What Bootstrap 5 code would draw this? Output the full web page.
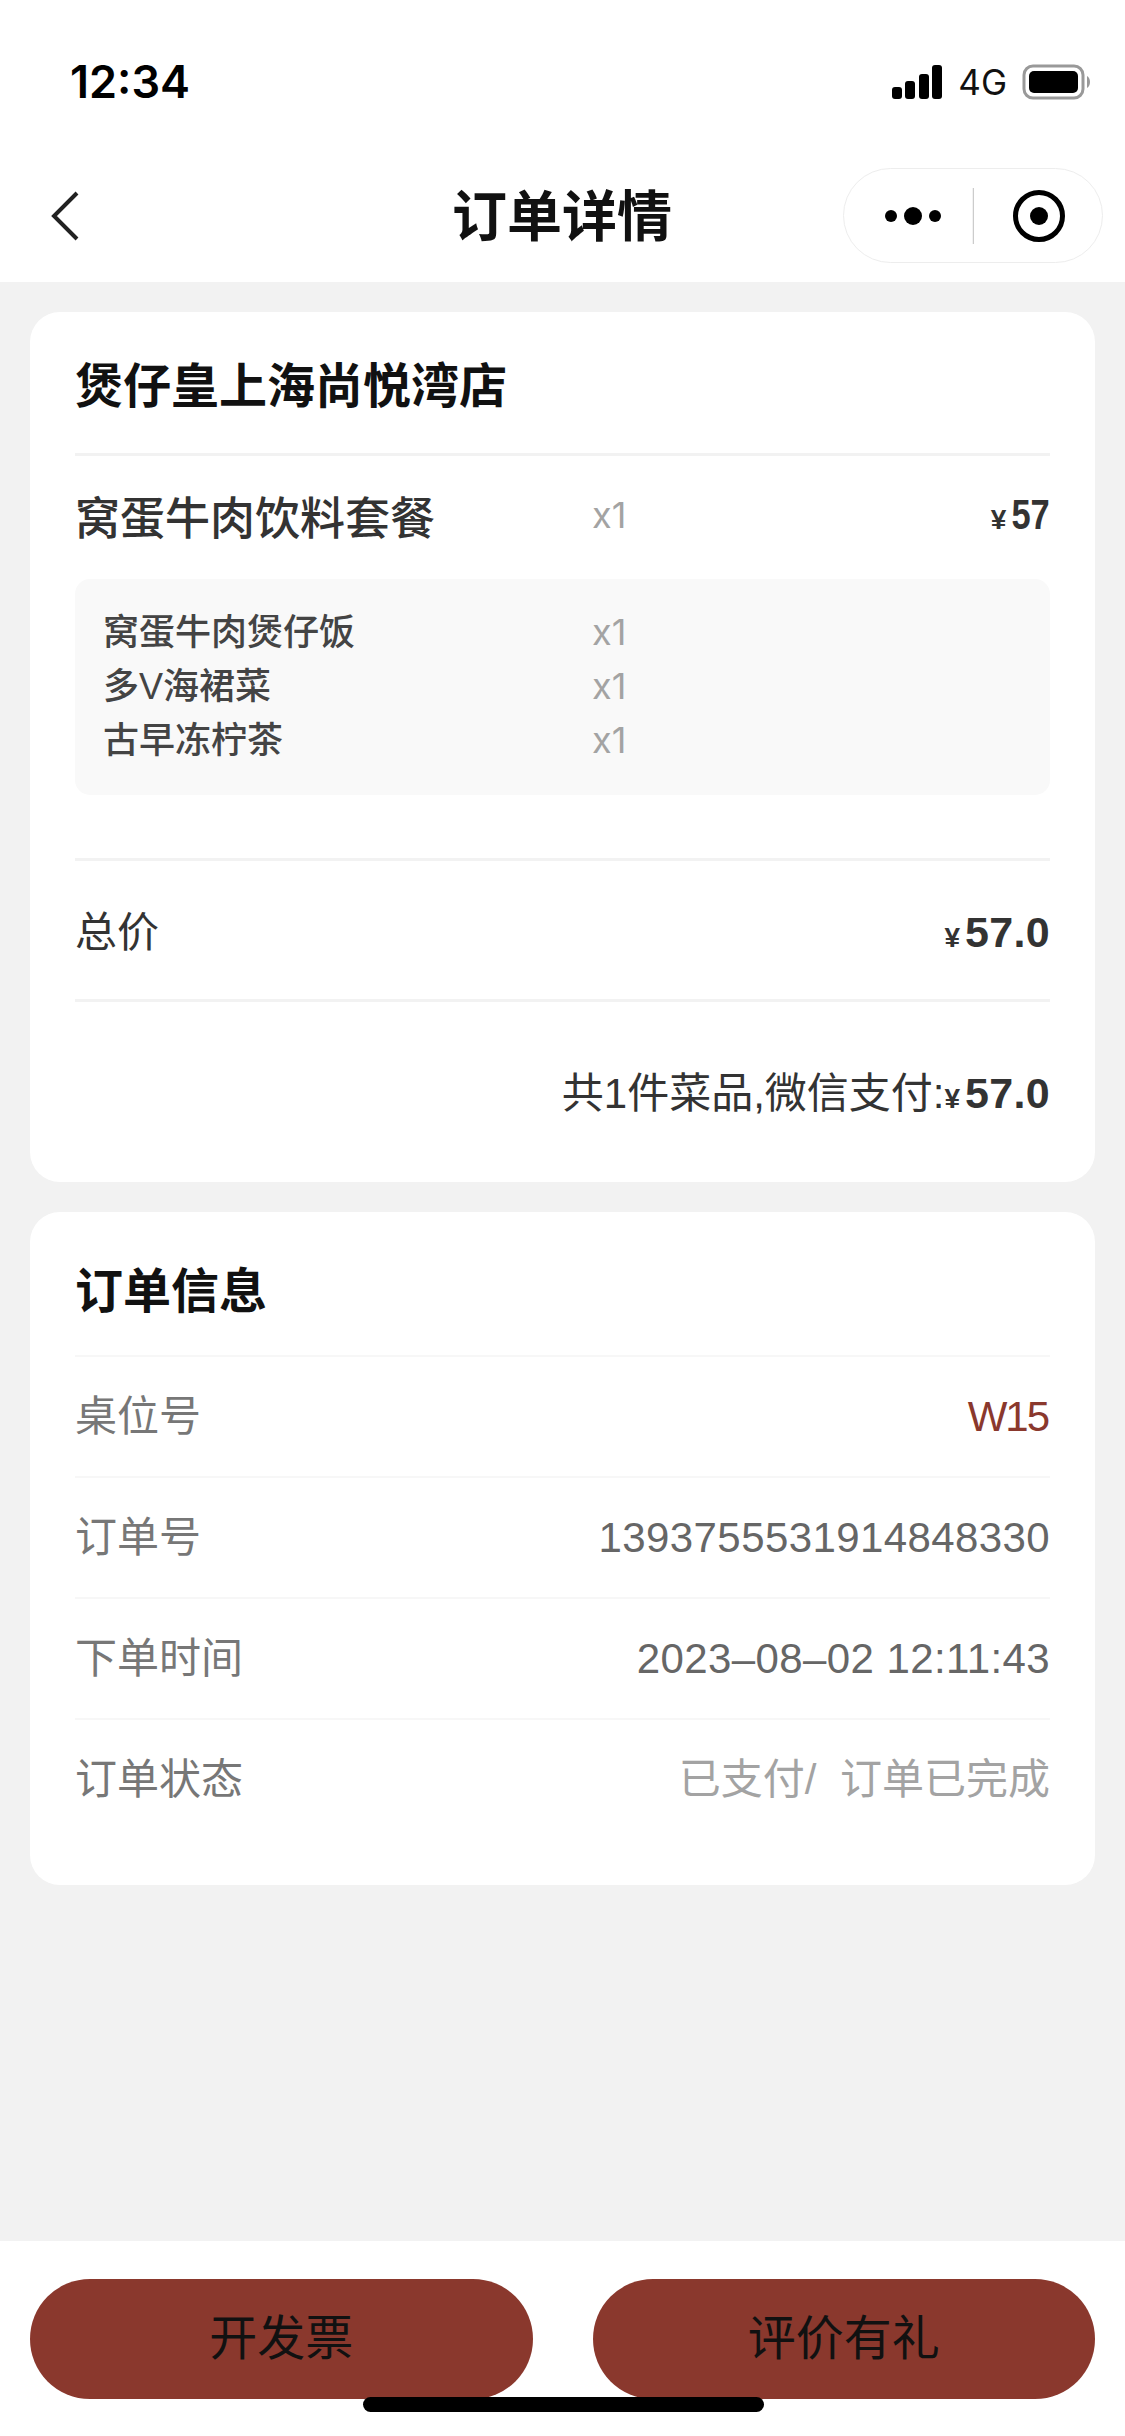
<!DOCTYPE html>
<html lang="zh-CN">
<head>
    <meta charset="UTF-8">
    <meta name="viewport" content="width=device-width, initial-scale=1.0">
    <title>订单详情</title>
    <link rel="stylesheet" href="https://cdn.jsdelivr.net/npm/bootstrap@5.3.0/dist/css/bootstrap.min.css">
    <style>
        body {
            background-color: #f2f2f2;
            font-family: "Liberation Sans", "Noto Sans CJK SC", sans-serif;
            width: 1125px;
            height: 2436px;
            overflow: hidden;
        }
        .page-wrap {
            height: 2436px;
        }
        .top-area {
            height: 282px;
            background: #fff;
        }
        .status-bar {
            height: 168px;
            padding: 60px 33px 0 70px;
        }
        .clock {
            font-size: 45px;
            font-weight: 600;
            font-family: Inter, "Liberation Sans", sans-serif;
            color: #000;
            line-height: 44px;
        }
        .net-text {
            font-size: 35px;
            line-height: 44px;
            color: #111;
            margin-right: -1px;
            font-family: Inter, "Liberation Sans", sans-serif;
        }
        .title-bar {
            height: 114px;
            padding: 0 22px 20px 50px;
        }
        .back-icon {
            margin-top: 22px;
        }
        .page-title {
            font-size: 55px;
            font-weight: 700;
            color: #111;
            left: 452px;
            top: 0;
            line-height: 98px;
        }
        .capsule {
            width: 260px;
            height: 95px;
            border: 1.5px solid #ededed;
            border-radius: 48px;
        }
        .panel {
            background: #fff;
            border-radius: 30px;
            margin: 30px 30px 0;
            padding: 0 45px;
        }
        .panel-one {
            height: 870px;
        }
        .panel-two {
            height: 673px;
        }
        .panel-title {
            font-size: 48px;
            font-weight: 700;
            color: #111;
            line-height: 60px;
        }
        .shop-title {
            height: 141px;
            padding-top: 45px;
        }
        .info-title {
            height: 143px;
            padding-top: 50px;
        }
        .rule {
            height: 3px;
            background: #f2f2f2;
        }
        .rule-gap {
            margin-top: 63px;
        }
        .dish-row {
            height: 123px;
            padding-top: 4px;
        }
        .dish-name {
            font-size: 45px;
            font-weight: 500;
            color: #333;
            width: 517px;
            line-height: 60px;
        }
        .qty {
            font-size: 36px;
            color: #a3a3a3;
            font-family: Inter, "Liberation Sans", sans-serif;
            line-height: 54px;
        }
        .dish-qty {
            margin-bottom: 10px;
        }
        .dish-price {
            margin-bottom: 10px;
        }
        .yen {
            font-size: 28px;
            font-weight: 700;
            color: #333;
            margin-right: 5px;
        }
        .amount {
            font-size: 43px;
            font-weight: 700;
            color: #333;
            letter-spacing: .3px;
            font-family: "Liberation Sans", sans-serif;
        }
        .amount-narrow {
            display: inline-block;
            font-size: 42px;
            letter-spacing: 0;
            margin-left: -8px;
            transform: scaleX(.82);
            transform-origin: right center;
        }
        .set-box {
            height: 216px;
            background: #f9f9f9;
            border-radius: 15px;
            padding: 26px 28px;
        }
        .set-line {
            height: 54px;
        }
        .set-name {
            width: 489px;
            font-size: 36px;
            font-weight: 500;
            color: #444;
            line-height: 54px;
            padding-top: 1px;
        }
        .plain-text {
            font-size: 42px;
            color: #333;
        }
        .total-row {
            height: 138px;
            padding-top: 5px;
        }
        .pay-row {
            height: 181px;
            padding-top: 1px;
        }
        .info-row {
            height: 121px;
            border-top: 2px solid #f7f7f7;
            font-size: 42px;
            color: #777;
        }
        .info-val {
            color: #666;
            font-size: 42px;
            letter-spacing: .4px;
        }
        .info-red {
            color: #8a382d;
            letter-spacing: -2px;
            margin-right: 2px;
        }
        .info-muted {
            color: #a3a3a3;
            letter-spacing: 0;
            word-spacing: 12px;
        }
        .foot-bar {
            height: 195px;
            background: #fff;
            padding: 38px 30px 0;
            gap: 60px;
        }
        .foot-btn {
            flex: 1;
            height: 120px;
            border: 0;
            border-radius: 60px;
            background: #8a382d;
            color: #111;
            font-size: 48px;
            line-height: 120px;
            padding: 0;
        }
        .home-bar {
            left: 363px;
            top: 2397px;
            width: 401px;
            height: 15px;
            border-radius: 8px;
            background: #000;
        }
    </style>
</head>
<body>
    <div class="page-wrap d-flex flex-column position-relative">
        <div class="top-area">
            <div class="status-bar d-flex justify-content-between align-items-start">
                <span class="clock">12:34</span>
                <div class="d-flex align-items-center gap-3">
                    <svg width="50" height="34" viewBox="0 0 50 34">
                        <rect x="0" y="22" width="10" height="12" rx="3" fill="#000"/>
                        <rect x="13" y="16" width="10" height="18" rx="3" fill="#000"/>
                        <rect x="27" y="9" width="10" height="25" rx="3" fill="#000"/>
                        <rect x="40" y="0" width="10" height="34" rx="3" fill="#000"/>
                    </svg>
                    <span class="net-text">4G</span>
                    <svg width="70" height="36" viewBox="0 0 70 36">
                        <rect x="2" y="2" width="59" height="32" rx="9" fill="none" stroke="#999" stroke-width="3"/>
                        <rect x="7" y="7" width="49" height="22" rx="5" fill="#000"/>
                        <path d="M65 12 C69 14 69 22 65 24 Z" fill="#999"/>
                    </svg>
                </div>
            </div>
            <div class="title-bar d-flex justify-content-between align-items-start position-relative">
                <svg class="back-icon" width="30" height="52" viewBox="0 0 30 52">
                    <path d="M27 3 L4 26 L27 49" fill="none" stroke="#222" stroke-width="4"/>
                </svg>
                <div class="page-title position-absolute">订单详情</div>
                <div class="capsule d-flex align-items-center">
                    <svg width="130" height="56" viewBox="0 0 130 56">
                        <circle cx="47" cy="28" r="6" fill="#000"/>
                        <circle cx="69" cy="28" r="9" fill="#000"/>
                        <circle cx="91" cy="28" r="6" fill="#000"/>
                        <line x1="129.5" y1="0" x2="129.5" y2="56" stroke="#ccc" stroke-width="1.5"/>
                    </svg>
                    <svg width="128" height="56" viewBox="0 0 128 56">
                        <circle cx="65" cy="28" r="23.5" fill="none" stroke="#000" stroke-width="5"/>
                        <circle cx="65" cy="28" r="9" fill="#000"/>
                    </svg>
                </div>
            </div>
        </div>

        <div class="panel panel-one">
            <div class="panel-title shop-title">煲仔皇上海尚悦湾店</div>
            <div class="rule"></div>
            <div class="dish-row d-flex align-items-center">
                <div class="dish-name">窝蛋牛肉饮料套餐</div>
                <div class="qty dish-qty flex-grow-1">x1</div>
                <div class="dish-price"><span class="yen">¥</span><span class="amount amount-narrow">57</span></div>
            </div>
            <div class="set-box">
                <div class="set-line d-flex"><div class="set-name">窝蛋牛肉煲仔饭</div><div class="qty">x1</div></div>
                <div class="set-line d-flex"><div class="set-name">多V海裙菜</div><div class="qty">x1</div></div>
                <div class="set-line d-flex"><div class="set-name">古早冻柠茶</div><div class="qty">x1</div></div>
            </div>
            <div class="rule rule-gap"></div>
            <div class="total-row d-flex justify-content-between align-items-center">
                <span class="plain-text">总价</span>
                <div><span class="yen">¥</span><span class="amount">57.0</span></div>
            </div>
            <div class="rule"></div>
            <div class="pay-row d-flex justify-content-end align-items-center">
                <span class="plain-text">共1件菜品,微信支付:</span>
                <div><span class="yen">¥</span><span class="amount">57.0</span></div>
            </div>
        </div>

        <div class="panel panel-two">
            <div class="panel-title info-title">订单信息</div>
            <div class="info-row d-flex justify-content-between align-items-center"><span>桌位号</span><span class="info-val info-red">W15</span></div>
            <div class="info-row d-flex justify-content-between align-items-center"><span>订单号</span><span class="info-val">1393755531914848330</span></div>
            <div class="info-row d-flex justify-content-between align-items-center"><span>下单时间</span><span class="info-val">2023–08–02 12:11:43</span></div>
            <div class="info-row d-flex justify-content-between align-items-center"><span>订单状态</span><span class="info-val info-muted">已支付/ 订单已完成</span></div>
        </div>

        <div class="flex-grow-1"></div>
        <div class="foot-bar d-flex">
            <button class="foot-btn" type="button">开发票</button>
            <button class="foot-btn" type="button">评价有礼</button>
        </div>
        <div class="home-bar position-absolute"></div>
    </div>
    <script src="https://cdn.jsdelivr.net/npm/bootstrap@5.3.0/dist/js/bootstrap.bundle.min.js"></script>
</body>
</html>
